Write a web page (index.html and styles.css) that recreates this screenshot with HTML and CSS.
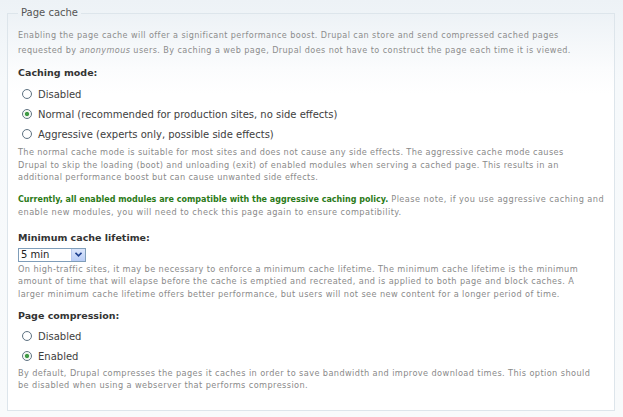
FILE: index.html
```html
<!DOCTYPE html>
<html>
<head>
  <title>Page cache</title>
  <meta charset="UTF-8">
  <link rel="stylesheet" href="styles.css">
</head>
<body>
  <fieldset class="panel">
    <legend>Page cache</legend>
    <p class="intro">Enabling the page cache will offer a significant performance boost. Drupal can store and send compressed cached pages<br>requested by <em>anonymous</em> users. By caching a web page, Drupal does not have to construct the page each time it is viewed.</p>

    <div class="group group-mode">
      <div class="group-title">Caching mode:</div>
      <div class="options">
        <label class="option"><input type="radio" name="cache"> Disabled</label>
        <label class="option"><input type="radio" name="cache" checked> Normal (recommended for production sites, no side effects)</label>
        <label class="option"><input type="radio" name="cache"> Aggressive (experts only, possible side effects)</label>
      </div>
      <p class="desc desc-mode">The normal cache mode is suitable for most sites and does not cause any side effects. The aggressive cache mode causes<br>Drupal to skip the loading (boot) and unloading (exit) of enabled modules when serving a cached page. This results in an<br>additional performance boost but can cause unwanted side effects.</p>
      <p class="desc note"><strong class="ok">Currently, all enabled modules are compatible with the aggressive caching policy.</strong> Please note, if you use aggressive caching and<br>enable new modules, you will need to check this page again to ensure compatibility.</p>
    </div>

    <div class="group group-lifetime">
      <div class="group-title">Minimum cache lifetime:</div>
      <div class="select">
        <select>
          <option>5 min</option>
        </select>
        <span class="select-btn">
          <svg width="7" height="5" viewBox="0 0 7 5"><path d="M0.5 0.8 L3.5 3.8 L6.5 0.8" fill="none" stroke="#1d3f8f" stroke-width="1.6"/></svg>
        </span>
      </div>
      <p class="desc desc-lifetime">On high-traffic sites, it may be necessary to enforce a minimum cache lifetime. The minimum cache lifetime is the minimum<br>amount of time that will elapse before the cache is emptied and recreated, and is applied to both page and block caches. A<br>larger minimum cache lifetime offers better performance, but users will not see new content for a longer period of time.</p>
    </div>

    <div class="group group-compression">
      <div class="group-title">Page compression:</div>
      <div class="options">
        <label class="option"><input type="radio" name="compress"> Disabled</label>
        <label class="option"><input type="radio" name="compress" checked> Enabled</label>
      </div>
      <p class="desc desc-compression">By default, Drupal compresses the pages it caches in order to save bandwidth and improve download times. This option should<br>be disabled when using a webserver that performs compression.</p>
    </div>
  </fieldset>
</body>
</html>
```

FILE: styles.css
```css
body {
  margin: 0;
  padding: 6px 8px 7px 7px;
  font-family: "DejaVu Sans", Verdana, sans-serif;
  background: linear-gradient(#edf2f6, #f6f9fb 80px, #f8fafb);
}
.panel {
  margin: 0;
  padding: 0 9px 19px 10px;
  border: 1px solid #dde5eb;
  background: linear-gradient(#edf2f6, #fbfcfd 55px, #fff 80px);
}
.panel legend {
  margin-left: 0;
  padding: 0 3px;
  font-size: 10px;
  line-height: 14px;
  color: #555;
}
.intro {
  margin: 8px 0 0;
  font-size: 8.1px;
  line-height: 15px;
  letter-spacing: 0.42px;
  white-space: nowrap;
  color: #8c8c8c;
}
.intro em {
  font-style: italic;
}
.group-title {
  font-size: 9.5px;
  line-height: 14px;
  font-weight: bold;
  color: #333;
}
.group-mode {
  margin-top: 8px;
}
.group-lifetime {
  margin-top: 12px;
}
.group-compression {
  margin-top: 9px;
}
.options {
  margin-top: 4px;
}
.group-compression .options {
  margin-top: 3px;
}
.option {
  display: flex;
  align-items: center;
  gap: 6px;
  height: 20px;
  padding-left: 4px;
  font-size: 10px;
  color: #3e3e3e;
}
.option input {
  appearance: none;
  margin: 0;
  width: 10px;
  height: 10px;
  border: 1px solid #5f7382;
  border-radius: 50%;
  background: radial-gradient(circle, #fff 55%, #e6ebee);
}
.option input:checked {
  background: radial-gradient(circle, #3f9a45 0, #3f9a45 1.8px, #e8f2e6 2.4px, #fff 4px);
}
.desc {
  margin: 2px 0 0;
  font-size: 8.2px;
  line-height: 12.5px;
  letter-spacing: 0.45px;
  white-space: nowrap;
  color: #8a8a8a;
}
.desc-mode {
  letter-spacing: 0.36px;
}
.desc.note {
  margin-top: 9px;
}
.desc-lifetime {
  margin-top: 1px;
  letter-spacing: 0.4px;
}
.desc-compression {
  margin-top: 1px;
  line-height: 12px;
  letter-spacing: 0.4px;
}
.ok {
  font-size: 8px;
  letter-spacing: 0;
  color: #2b7a17;
}
.select {
  display: flex;
  width: fit-content;
  margin-top: 3px;
  height: 12px;
  border: 1px solid #7f9db9;
  background: #fff;
}
.select select {
  appearance: none;
  width: 52px;
  height: 12px;
  margin: 0;
  padding: 0 0 0 2px;
  border: none;
  background: #fff;
  font-family: "DejaVu Sans", Verdana, sans-serif;
  font-size: 10px;
  line-height: 12px;
  color: #222;
}
.select-btn {
  display: flex;
  align-items: center;
  justify-content: center;
  width: 13px;
  height: 12px;
  background: linear-gradient(#dce6fb, #b9cdf6);
  border-left: 1px solid #b8c9ee;
}
```
